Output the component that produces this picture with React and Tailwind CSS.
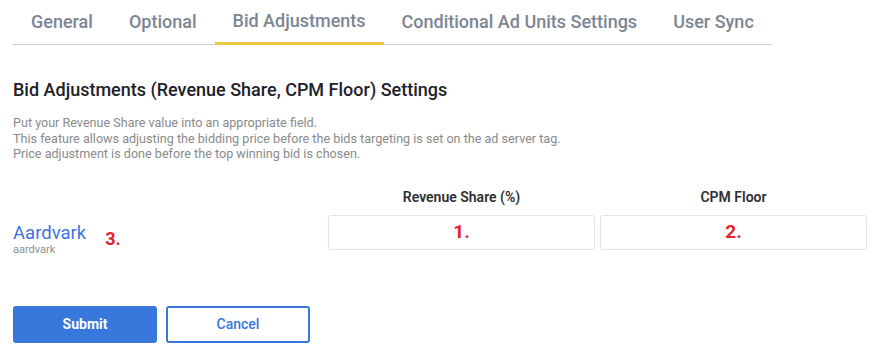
import React, { useState } from 'react'

const tabs = ['General', 'Optional', 'Bid Adjustments', 'Conditional Ad Units Settings', 'User Sync']

function Tabs({ active }) {
  return (
    <div className="flex w-[759px] h-[45px] border-b border-[#c9d2d8]">
      {tabs.map((t) => (
        <div
          key={t}
          className={
            t === active
              ? 'px-[18px] h-[45px] -mb-px flex items-center pb-[2px] border-b-[3px] border-[#efc84a] text-[18px] font-medium text-[#7c8693]'
              : 'px-[18px] h-[45px] flex items-center pb-[2px] text-[18px] font-medium text-[#7c8693]'
          }
        >
          {t}
        </div>
      ))}
    </div>
  )
}

function App() {
  const [share, setShare] = useState('')
  const [floor, setFloor] = useState('')

  return (
    <div className="w-[886px] h-[360px] bg-white pl-[13px] overflow-hidden" style={{ fontFamily: 'Roboto, "Liberation Sans", sans-serif' }}>
      <Tabs active="Bid Adjustments" />

      <h2 className="mt-[35px] text-[18px] font-medium leading-5 text-[#1e2129]">
        Bid Adjustments (Revenue Share, CPM Floor) Settings
      </h2>

      <div className="mt-[15px] text-[12.6px] leading-[15.5px] text-[#8a8a8a]">
        <p>Put your Revenue Share value into an appropriate field.</p>
        <p>This feature allows adjusting the bidding price before the bids targeting is set on the ad server tag.</p>
        <p>Price adjustment is done before the top winning bid is chosen.</p>
      </div>

      <div className="mt-[25px] flex">
        <div className="w-[315px]" />
        <div className="w-[267px] text-center text-[14px] font-semibold text-[#2d2f33]">Revenue Share (%)</div>
        <div className="w-[5px]" />
        <div className="w-[267px] text-center text-[14px] font-semibold text-[#2d2f33]">CPM Floor</div>
      </div>

      <div className="mt-[7px] flex items-start">
        <div className="w-[315px] flex items-start pt-[7px]">
          <div>
            <div className="text-[18.5px] leading-[22px] text-[#3d73df]">Aardvark</div>
            <div className="text-[11px] leading-3 text-[#8a8f96]">aardvark</div>
          </div>
          <div className="ml-[19px] mt-[3px] text-[18px] font-bold text-[#e8202a]">3.</div>
        </div>
        <div className="relative w-[267px] h-[35px]">
          <input
            value={share}
            onChange={(e) => setShare(e.target.value)}
            className="w-full h-full border border-[#dfe4ec] rounded-[3px] outline-none px-2"
          />
          <span className="absolute inset-0 flex items-center justify-center text-[19px] font-bold text-[#e8202a] pointer-events-none">1.</span>
        </div>
        <div className="w-[5px]" />
        <div className="relative w-[267px] h-[35px]">
          <input
            value={floor}
            onChange={(e) => setFloor(e.target.value)}
            className="w-full h-full border border-[#dfe4ec] rounded-[3px] outline-none px-2"
          />
          <span className="absolute inset-0 flex items-center justify-center text-[19px] font-bold text-[#e8202a] pointer-events-none">2.</span>
        </div>
      </div>

      <div className="mt-[50px] flex gap-[9px]">
        <button className="w-[144px] h-[37px] rounded-[3px] bg-[#3877db] text-white text-[14px] font-bold">Submit</button>
        <button className="w-[144px] h-[37px] rounded-[3px] border-2 border-[#3877db] bg-white text-[#3877db] text-[14px] font-medium">Cancel</button>
      </div>
    </div>
  )
}

export default App
